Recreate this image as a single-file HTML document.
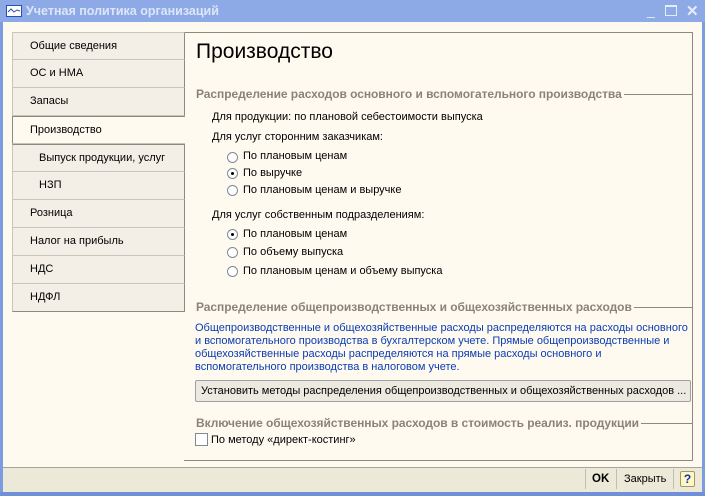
<!DOCTYPE html>
<html><head><meta charset="utf-8"><style>
*{margin:0;padding:0;box-sizing:border-box}
body{width:705px;height:496px;overflow:hidden;background:#fffaf0;font-family:"Liberation Sans",sans-serif;font-size:11px;color:#000;position:relative}
.a{position:absolute;white-space:nowrap}
#tb{left:0;top:0;width:705px;height:22px;background:#8eaae6;color:#dde6f8;font-weight:bold;font-size:12.5px}
#lb{left:0;top:22px;width:3px;height:474px;background:#7d9be0}
#rb{right:0;top:22px;width:3px;height:474px;background:#7d9be0}
#bb{left:0;bottom:0;width:705px;height:4px;background:#6f8fd8}
.tab{position:absolute;left:12px;width:173px;height:28px;background:#f3efe6;border:1px solid #c8c4ba;border-top:none;border-right:1px solid #8a8a80;padding:0 0 0 17px;line-height:27px}
.tab.s{background:#fffaf0;border-right:none;border-left:1px solid #8a8a80}
#pn{left:184px;top:32px;width:509px;height:429px;border:1px solid #8a8a80;border-left:none}
.h{position:absolute;left:196px;width:496px;display:flex;align-items:center;color:#8a8378;font-weight:bold;font-size:12px;letter-spacing:-0.05px;white-space:nowrap}
.h::after{content:"";flex:1;height:1px;background:#8a8a80;margin-left:2px}
.r{position:absolute;width:11px;height:11px;border:1px solid #7f8a96;border-radius:50%;background:#fff}
.r.on::after{content:"";position:absolute;left:3px;top:3px;width:3px;height:3px;background:#000;border-radius:50%}
.bl{color:#0a3cb4}
</style></head><body>
<div class="a" id="tb"><svg style="position:absolute;left:6px;top:5px" width="16" height="12"><rect x="0.5" y="0.5" width="15" height="11" fill="#fff" stroke="#2850b0"/><polyline points="2,7 5,4 8,7 11,5 14,6" fill="none" stroke="#2850b0"/></svg><span style="position:absolute;left:26px;top:4px">Учетная политика организаций</span>
<span style="position:absolute;left:647px;top:2px;font-weight:normal;color:#e6ecfa;font-size:14px">_</span>
<span style="position:absolute;left:665px;top:5px;width:12px;height:11px;border:1.5px solid #e6ecfa;border-top-width:2px"></span>
<span style="position:absolute;left:686px;top:2px;font-size:15px;color:#e6ecfa">✕</span></div>
<div class="a" id="lb"></div><div class="a" id="rb"></div>
<div class="a" id="pn"></div>
<div class="tab" style="top:32px;border-top:1px solid #c8c4ba">Общие сведения</div>
<div class="tab" style="top:60px">ОС и НМА</div>
<div class="tab" style="top:88px">Запасы</div>
<div class="tab s" style="top:116px;border-top:1px solid #8a8a80">Производство</div>
<div class="tab" style="top:144px;padding-left:26px;border-top:1px solid #8a8a80">Выпуск продукции, услуг</div>
<div class="tab" style="top:172px;padding-left:26px">НЗП</div>
<div class="tab" style="top:200px">Розница</div>
<div class="tab" style="top:228px">Налог на прибыль</div>
<div class="tab" style="top:256px">НДС</div>
<div class="tab" style="top:284px;border-bottom:1px solid #8a8a80">НДФЛ</div>
<div class="a" style="left:196px;top:40px;font-size:21px">Производство</div>
<div class="h" style="top:87px">Распределение расходов основного и вспомогательного производства</div>
<div class="a" style="left:212px;top:111px">Для продукции: по плановой себестоимости выпуска</div>
<div class="a" style="left:212px;top:131px">Для услуг сторонним заказчикам:</div>
<div class="r" style="left:227px;top:152px"></div><div class="a" style="left:243px;top:150px">По плановым ценам</div>
<div class="r on" style="left:227px;top:168px"></div><div class="a" style="left:243px;top:167px">По выручке</div>
<div class="r" style="left:227px;top:185px"></div><div class="a" style="left:243px;top:184px">По плановым ценам и выручке</div>
<div class="a" style="left:212px;top:209px">Для услуг собственным подразделениям:</div>
<div class="r on" style="left:227px;top:229px"></div><div class="a" style="left:243px;top:228px">По плановым ценам</div>
<div class="r" style="left:227px;top:247px"></div><div class="a" style="left:243px;top:246px">По объему выпуска</div>
<div class="r" style="left:227px;top:266px"></div><div class="a" style="left:243px;top:265px">По плановым ценам и объему выпуска</div>
<div class="h" style="top:300px">Распределение общепроизводственных и общехозяйственных расходов</div>
<div class="a bl" style="left:195px;top:322px;line-height:13px">Общепроизводственные и общехозяйственные расходы распределяются на расходы основного<br>и вспомогательного производства в бухгалтерском учете. Прямые общепроизводственные и<br>общехозяйственные расходы распределяются на прямые расходы основного и<br>вспомогательного производства в налоговом учете.</div>
<div class="a" style="left:195px;top:380px;width:496px;height:22px;background:#ece9e1;border:1px solid #a0a0a0;border-radius:2px;padding:4px 0 0 5px">Установить методы распределения общепроизводственных и общехозяйственных расходов ...</div>
<div class="h" style="top:416px">Включение общехозяйственных расходов в стоимость реализ. продукции</div>
<div class="a" style="left:195px;top:433px;width:13px;height:13px;border:1px solid #7f8a96;background:#fff"></div>
<div class="a" style="left:211px;top:434px">По методу «директ-костинг»</div>
<div class="a" style="left:3px;top:467px;width:699px;height:25px;background:#ece9d8;border-top:1px solid #a8a498"></div>
<div class="a" style="left:585px;top:469px;width:1px;height:20px;background:#c0bcb0"></div>
<div class="a" style="left:592px;top:473px;font-weight:bold;font-size:11.5px">OK</div>
<div class="a" style="left:616px;top:469px;width:1px;height:20px;background:#c0bcb0"></div>
<div class="a" style="left:624px;top:473px">Закрыть</div>
<div class="a" style="left:673px;top:469px;width:1px;height:20px;background:#c0bcb0"></div>
<div class="a" style="left:680px;top:471px;width:15px;height:16px;background:#fff8c0;border:1px solid #a09870;border-radius:2px;color:#1030c0;font-weight:bold;font-size:12px;text-align:center;line-height:14px">?</div>
<div class="a" id="bb"></div>
</body></html>
